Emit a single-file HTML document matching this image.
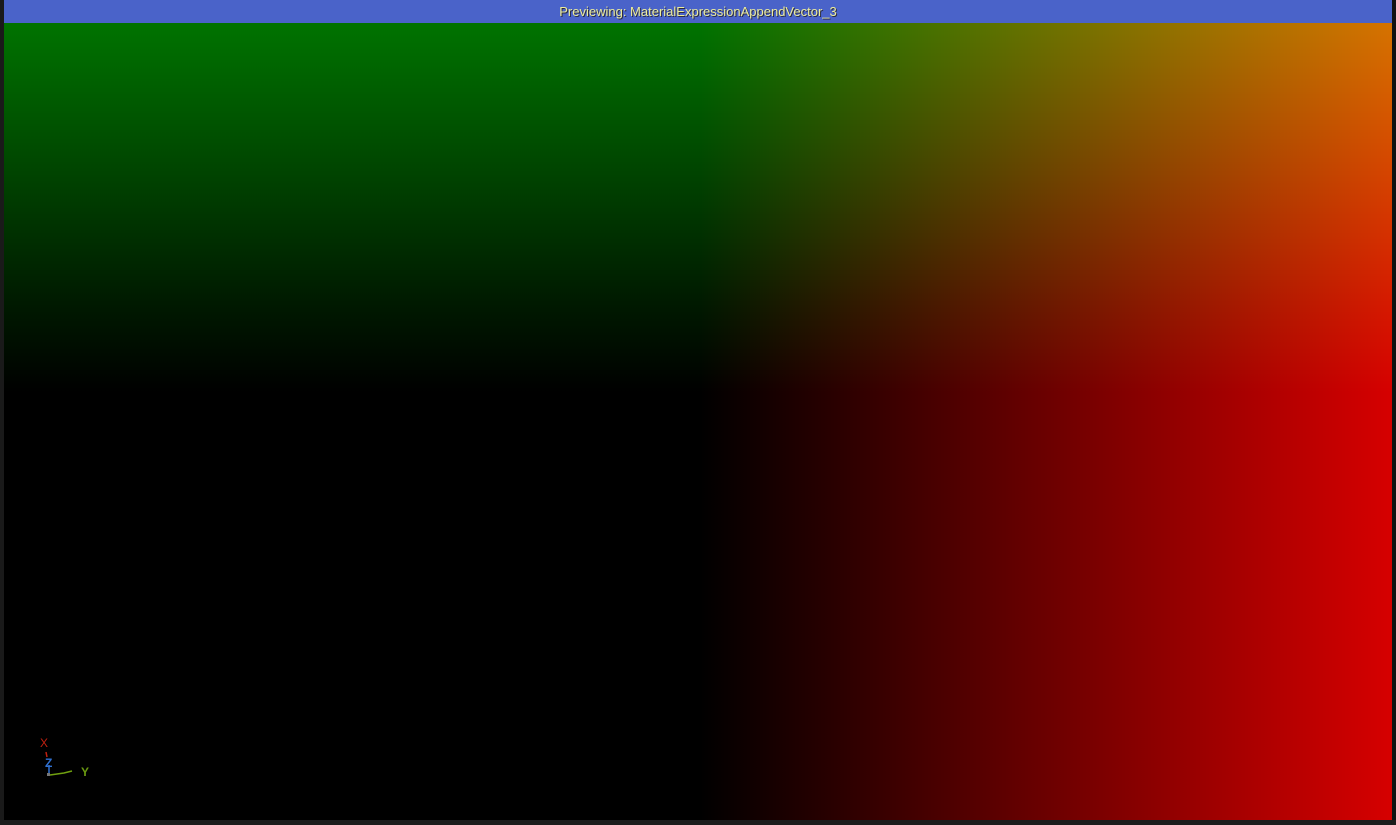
<!DOCTYPE html>
<html><head><meta charset="utf-8"><style>
html,body{margin:0;padding:0;width:1396px;height:825px;overflow:hidden;background:#161616;font-family:"Liberation Sans",sans-serif}
#lb{position:absolute;left:0;top:0;width:4px;height:825px;background:#1a1a1a}
#rb{position:absolute;left:1392px;top:0;width:4px;height:825px;background:#121212}
#bar{position:absolute;left:4px;top:0;width:1388px;height:23px;background:#4a63c9;color:#ecec9c;font-size:13px;line-height:23px;text-align:center;text-shadow:1px 1px 0 #2a2a40}
#vp{position:absolute;left:4px;top:23px;width:1388px;height:797px;background:#000;overflow:hidden}
#g{position:absolute;inset:0;background:linear-gradient(to bottom,#007300 0px,#004400 150px,#001a00 280px,#000 370px,#000 100%)}
#r{position:absolute;inset:0;background:linear-gradient(to right,#000 0px,#000 696px,#d60000 1388px);mix-blend-mode:screen}
#bot{position:absolute;left:0;top:820px;width:1396px;height:5px;background:#1c1c1c}
</style></head><body>
<div id="lb"></div><div id="rb"></div>
<div id="bar">Previewing: MaterialExpressionAppendVector_3</div>
<div id="vp"><div id="g"></div><div id="r"></div>
<svg style="position:absolute;left:0;top:0" width="120" height="797">
<g transform="translate(-4,-23)">
<text x="40" y="747" fill="#c02010" font-size="12" font-family="Liberation Sans">X</text>
<line x1="46" y1="752" x2="47" y2="757" stroke="#c02010" stroke-width="1.5"/>
<text x="45" y="767" fill="#3070d0" font-size="12" font-weight="bold" font-family="Liberation Sans">Z</text>
<line x1="49" y1="765" x2="49" y2="774" stroke="#3070d0" stroke-width="1.5"/>
<polyline points="50,775 57,774 64,773 72,771" fill="none" stroke="#70a010" stroke-width="1.5"/>
<rect x="47" y="773" width="3" height="3" fill="#777"/>
<text x="81" y="776" fill="#6a9a10" font-size="12" font-weight="bold" font-family="Liberation Sans">Y</text>
</g></svg>
</div>
<div id="bot"></div>
</body></html>
